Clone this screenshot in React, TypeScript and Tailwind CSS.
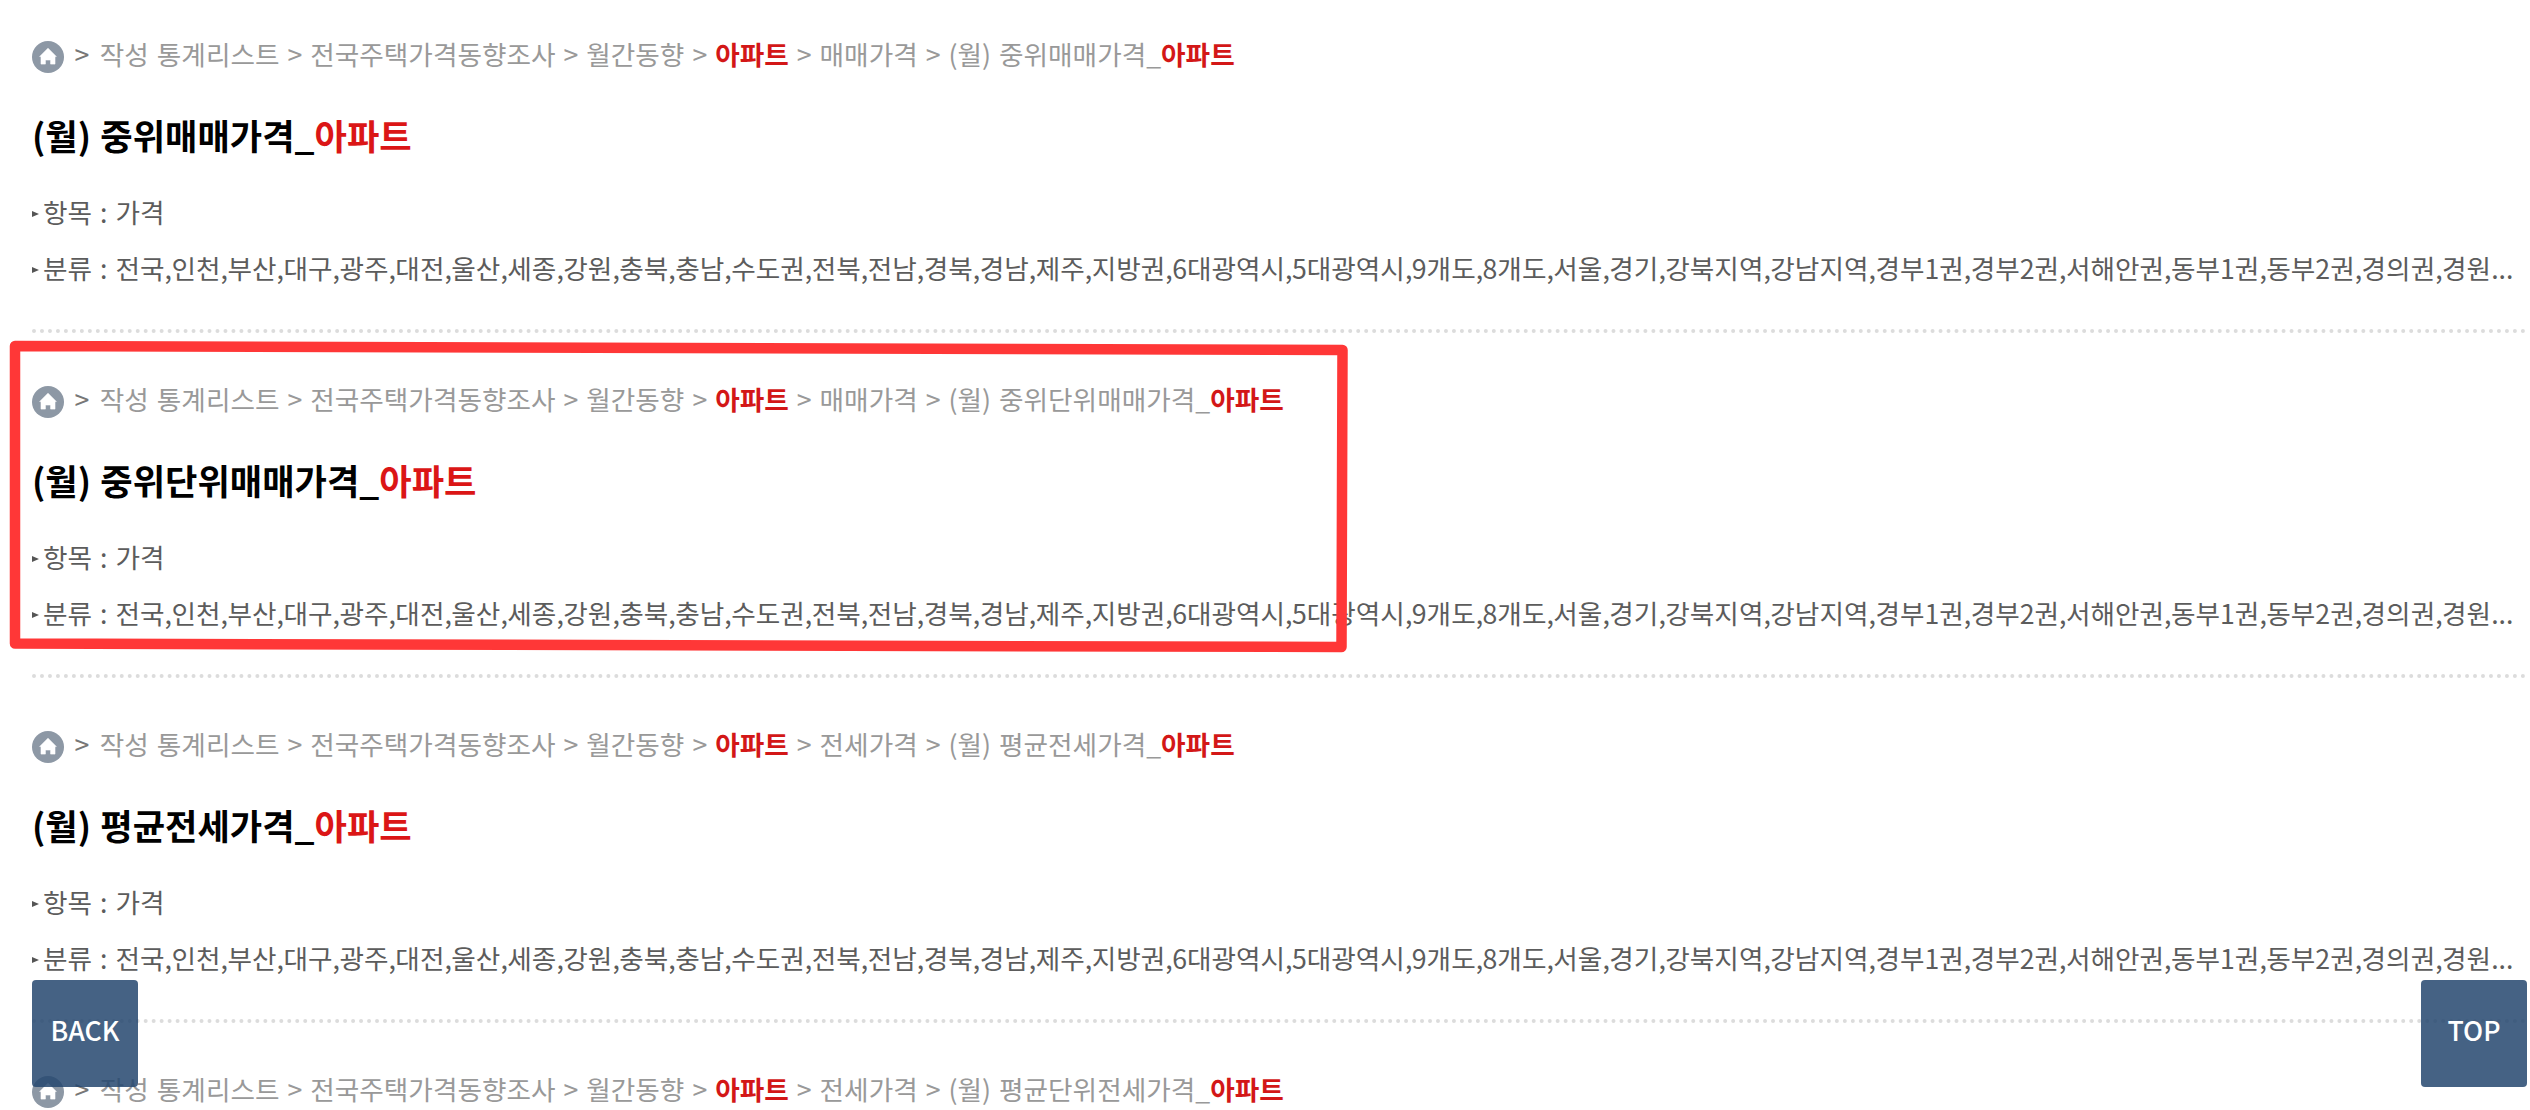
interface StatItem {
  id: number;
  category: string;
  title: string;
}

const KEYWORD = "아파트";

const items: StatItem[] = [
  { id: 1, category: "매매가격", title: "(월) 중위매매가격_" },
  { id: 2, category: "매매가격", title: "(월) 중위단위매매가격_" },
  { id: 3, category: "전세가격", title: "(월) 평균전세가격_" },
  { id: 4, category: "전세가격", title: "(월) 평균단위전세가격_" },
];

const regions =
  "전국,인천,부산,대구,광주,대전,울산,세종,강원,충북,충남,수도권,전북,전남,경북,경남,제주,지방권,6대광역시,5대광역시,9개도,8개도,서울,경기,강북지역,강남지역,경부1권,경부2권,서해안권,동부1권,동부2권,경의권,경원...";

function HomeIcon() {
  return (
    <svg className="mt-1.5 h-8 w-8 shrink-0" viewBox="0 0 32 32">
      <circle cx="16" cy="16" fill="#8d98a5" r="16" />
      <path
        d="M16 7.2 L24.3 15.6 H23 V23.1 H18.6 V19 H13.4 V23.1 H9 V15.6 H7.7 Z"
        fill="#fff"
        stroke="#fff"
        strokeLinejoin="round"
        strokeWidth="0.6"
      />
    </svg>
  );
}

function Field({ label, value }: { label: string; value: string }) {
  return (
    <li className="flex h-[56px] items-center text-[26.67px] leading-[56px] text-[#5c5c5c]">
      <svg className="mt-1 mr-1 h-[6px] w-[7px] shrink-0" viewBox="0 0 7 6">
        <path d="M0 0 L7 3 L0 6 Z" fill="#555" />
      </svg>
      <span className="[word-spacing:2px]">
        {label} :{" "}
        {value.split(",").map((part, i) => (
          <span key={i}>
            {i > 0 && <span className="tracking-[-0.5px]">,</span>}
            {part}
          </span>
        ))}
      </span>
    </li>
  );
}

function ResultRow({ item }: { item: StatItem }) {
  return (
    <li className="h-[345px] w-[2496px] shrink-0 border-b-4 border-dotted border-[#dcdcdc] pt-[42px]">
      <div className="flex h-12 items-center text-[26.67px] leading-[48px] text-[#999]">
        <HomeIcon />
        <span className="ml-[10.5px] text-[#777]">&gt;</span>
        <span className="ml-[10.5px] [word-spacing:2.03px]">
          작성 통계리스트 &gt; 전국주택가격동향조사 &gt; 월간동향 &gt;{" "}
          <b className="font-bold text-[#d31717]">{KEYWORD}</b> &gt;{" "}
          {item.category} &gt; {item.title}
          <b className="font-bold text-[#d31717]">{KEYWORD}</b>
        </span>
      </div>
      <h2 className="mt-[33px] h-12 text-[35.2px] leading-[48px] font-bold text-black [word-spacing:1.4px]">
        {item.title}
        <span className="text-[#db1616]">{KEYWORD}</span>
      </h2>
      <ul className="mt-[24.5px]">
        <Field label="항목" value="가격" />
        <Field label="분류" value={regions} />
      </ul>
    </li>
  );
}

export default function App() {
  return (
    <div className="relative h-[1110px] w-[2530px] overflow-hidden bg-white font-['Noto_Sans_CJK_KR',sans-serif] whitespace-nowrap">
      <ul className="-mt-3 ml-8 flex flex-col">
        {items.map((item) => (
          <ResultRow key={item.id} item={item} />
        ))}
      </ul>

      {/* Hand-drawn highlight around the second result */}
      <svg
        className="pointer-events-none absolute top-[330px] left-0 h-[330px] w-[1360px]"
        viewBox="0 330 1360 330"
      >
        <path
          d="M15 346 L1342.5 350 L1341.5 647 L15 643.5 Z"
          fill="none"
          stroke="#ff3737"
          strokeLinejoin="round"
          strokeWidth="10.5"
        />
      </svg>

      <button className="absolute top-[980px] left-8 h-[107px] w-[106px] rounded-[4px] bg-[rgba(37,70,110,0.85)] pb-[8px] text-[26.67px] font-medium text-white">
        BACK
      </button>
      <button className="absolute top-[980px] left-[2421px] h-[107px] w-[106px] rounded-[4px] bg-[rgba(37,70,110,0.85)] pb-[8px] text-[26.67px] font-medium text-white">
        TOP
      </button>
    </div>
  );
}
